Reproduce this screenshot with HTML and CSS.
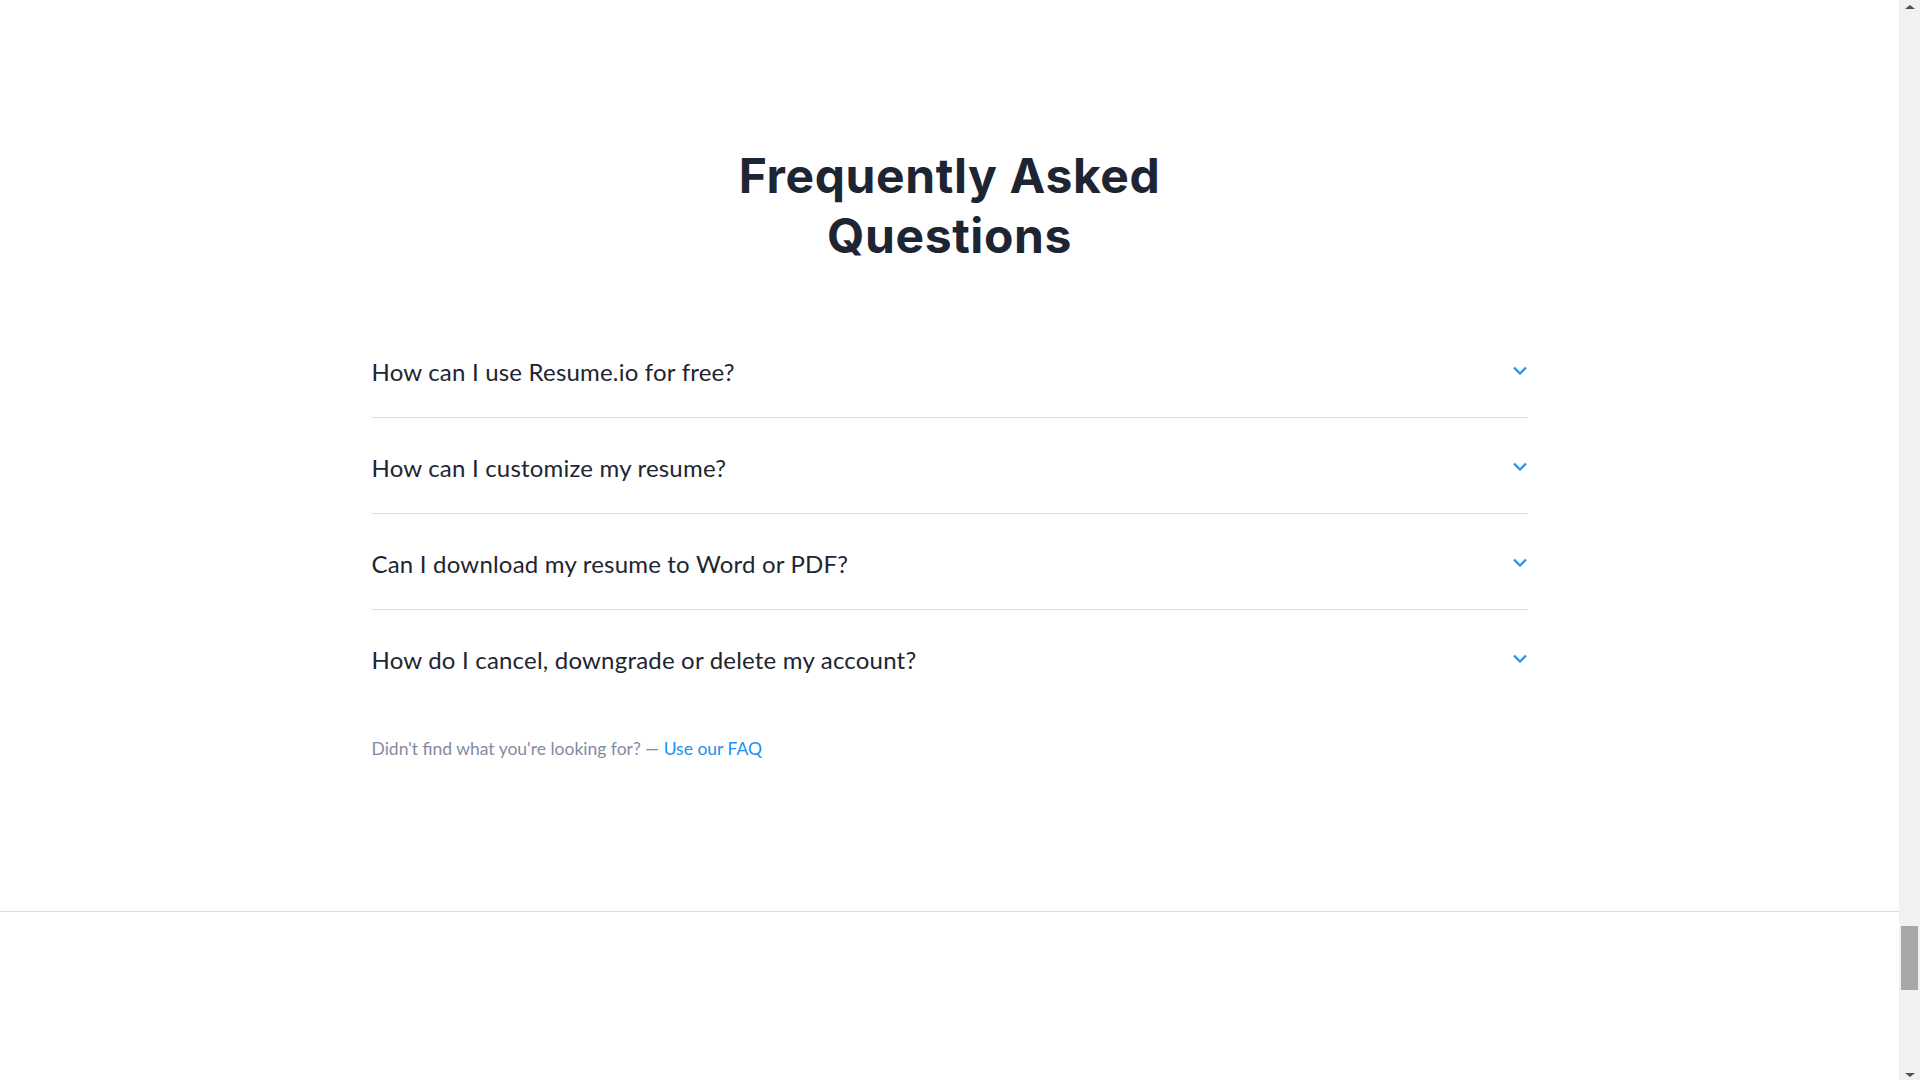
FILE: index.html
```html
<!DOCTYPE html>
<html lang="en">
<head>
<meta charset="utf-8">
<title>Frequently Asked Questions</title>
<link rel="stylesheet" href="styles.css">
</head>
<body>
<div class="page">
  <main class="main">
    <section class="faq">
      <h2 class="faq-title">Frequently Asked<br>Questions</h2>
      <ul class="faq-list">
        <li class="faq-item">
          <span class="faq-question">How can I use Resume.io for free?</span>
          <svg class="chevron" width="14" height="9" viewBox="0 0 14 9"><path d="M1 1.5 L7 7.5 L13 1.5" fill="none" stroke="currentColor" stroke-width="2.2"/></svg>
        </li>
        <li class="faq-item">
          <span class="faq-question">How can I customize my resume?</span>
          <svg class="chevron" width="14" height="9" viewBox="0 0 14 9"><path d="M1 1.5 L7 7.5 L13 1.5" fill="none" stroke="currentColor" stroke-width="2.2"/></svg>
        </li>
        <li class="faq-item">
          <span class="faq-question">Can I download my resume to Word or PDF?</span>
          <svg class="chevron" width="14" height="9" viewBox="0 0 14 9"><path d="M1 1.5 L7 7.5 L13 1.5" fill="none" stroke="currentColor" stroke-width="2.2"/></svg>
        </li>
        <li class="faq-item">
          <span class="faq-question">How do I cancel, downgrade or delete my account?</span>
          <svg class="chevron" width="14" height="9" viewBox="0 0 14 9"><path d="M1 1.5 L7 7.5 L13 1.5" fill="none" stroke="currentColor" stroke-width="2.2"/></svg>
        </li>
      </ul>
      <p class="faq-note">Didn't find what you're looking for? — <a class="faq-link" href="#">Use our FAQ</a></p>
    </section>
    <div class="footer-area"></div>
  </main>
  <div class="scrollbar">
    <div class="sb-arrow sb-up"></div>
    <div class="sb-track">
      <div class="sb-thumb"></div>
    </div>
    <div class="sb-arrow sb-down"></div>
  </div>
</div>
</body>
</html>
```
FILE: styles.css
```css
html, body {
  margin: 0;
  padding: 0;
  height: 100%;
  overflow: hidden;
  background: #ffffff;
}

.page {
  display: flex;
  height: 100vh;
  font-family: Lato, "Noto Sans", sans-serif;
  color: #1e2532;
}

.main {
  flex: 1;
  display: flex;
  flex-direction: column;
  min-width: 0;
}

.faq {
  width: 100%;
  box-sizing: border-box;
  padding: 146px calc((100% - 1156px) / 2) 150px;
  border-bottom: 1px solid #dadce4;
}

.faq-title {
  margin: 0 0 56px;
  text-align: center;
  font-family: Inter, Lato, sans-serif;
  font-size: 48px;
  line-height: 60px;
  font-weight: 700;
  letter-spacing: 0.6px;
  color: #1e2532;
}

.faq-list {
  list-style: none;
  margin: 0;
  padding: 0;
}

.faq-item {
  display: flex;
  align-items: center;
  justify-content: space-between;
  padding: 32px 0 31px;
  border-bottom: 1px solid #d9deeb;
}

.faq-item:last-child {
  border-bottom: none;
}

.faq-question {
  font-size: 24px;
  line-height: 32px;
  letter-spacing: 0.2px;
  padding-top: 2px;
  margin-bottom: -2px;
  color: #1e2532;
}

.chevron {
  display: block;
  color: #1a91f0;
  margin-right: 1px;
}

.faq-note {
  margin: 32px 0 0;
  font-size: 17.5px;
  line-height: 24px;
  color: #828ba2;
}

.faq-link {
  color: #1a91f0;
  text-decoration: none;
}

.footer-area {
  flex: 1;
  background: #ffffff;
}

.scrollbar {
  width: 21px;
  flex: none;
  display: flex;
  flex-direction: column;
  background: #f1f1f1;
}

.sb-arrow {
  height: 17px;
  display: flex;
  align-items: center;
  justify-content: center;
}

.sb-up::before {
  content: "";
  border-left: 5px solid transparent;
  border-right: 5px solid transparent;
  border-bottom: 4px solid #505050;
  margin-top: -4px;
}

.sb-down::before {
  content: "";
  border-left: 5px solid transparent;
  border-right: 5px solid transparent;
  border-top: 4px solid #505050;
  margin-top: 6px;
}

.sb-track {
  flex: 1;
  display: flex;
  flex-direction: column;
  justify-content: flex-end;
  padding: 0 2px 73px;
}

.sb-thumb {
  height: 64px;
  background: #a8a8a8;
}
```
